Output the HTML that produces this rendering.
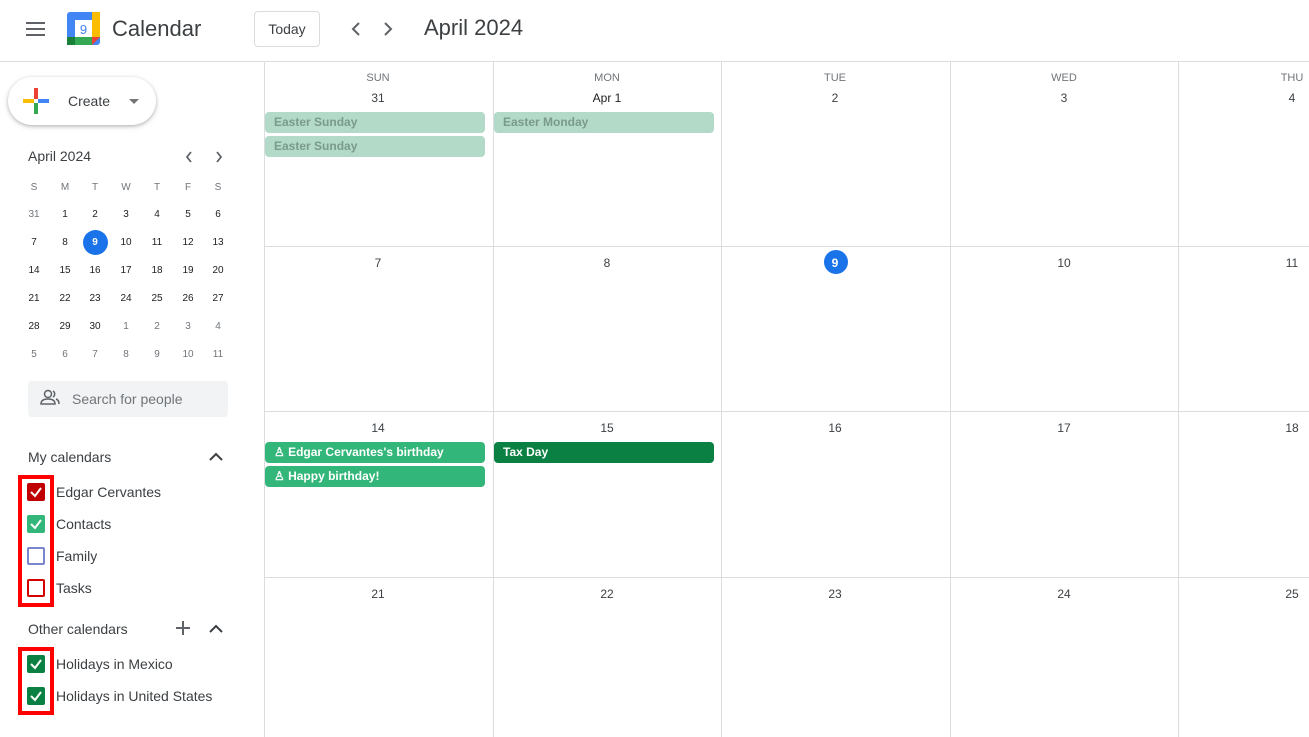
<!DOCTYPE html>
<html><head><meta charset="utf-8"><style>
*{margin:0;padding:0;box-sizing:border-box}
body{width:1309px;height:737px;overflow:hidden;background:#fff;font-family:"Liberation Sans",Arial,sans-serif;color:#3c4043;position:relative}
.a{position:absolute}
.mini{position:absolute;width:30px;text-align:center;font-size:10px;color:#202124}
.mini.o{color:#70757a}
.mh{font-size:10px;color:#70757a}
.vl{position:absolute;top:62px;bottom:0;width:1px;background:#dadce0}
.hl{position:absolute;left:264px;right:0;height:1px;background:#dadce0}
.dh{position:absolute;width:228px;text-align:center;font-size:11px;color:#70757a}
.dn{position:absolute;width:228px;text-align:center;font-size:12px;color:#3c4043}
.ev{position:absolute;height:21px;border-radius:4px;font-size:12px;font-weight:bold;padding-left:9px;line-height:21px;white-space:nowrap}
.cb{position:absolute;left:27px;width:18px;height:18px;border-radius:2px}
.cl{position:absolute;left:56px;font-size:14px;color:#3c4043}
</style></head><body>
<div class="a" style="left:26px;top:22px;width:19px;height:2px;background:#5f6368;box-shadow:0 6px 0 #5f6368,0 12px 0 #5f6368"></div>
<svg class="a" style="left:67px;top:12px" width="33" height="33" viewBox="0 0 33 33">
<rect x="0" y="0" width="33" height="33" rx="3" fill="#4285f4"/>
<rect x="25" y="0" width="8" height="25" fill="#fbbc04"/>
<rect x="0" y="25" width="25" height="8" fill="#34a853"/>
<rect x="0" y="25" width="8" height="8" fill="#188038"/>
<polygon points="25,25 33,25 25,33" fill="#ea4335"/>
<rect x="8" y="8" width="17" height="17" fill="#fff"/>
<text x="16.5" y="22" font-size="13" text-anchor="middle" fill="#4285f4" font-family="Liberation Sans">9</text>
</svg>
<div class="a" style="left:112px;top:16px;font-size:22px;color:#3c4043">Calendar</div>
<div class="a" style="left:254px;top:11px;width:66px;height:36px;border:1px solid #dadce0;border-radius:4px;font-size:14px;text-align:center;line-height:34px">Today</div>
<svg class="a" style="left:346px;top:19px" width="56" height="20"><path d="M13 4 L7 10 L13 16" fill="none" stroke="#5f6368" stroke-width="2"/><path d="M39 4 L45 10 L39 16" fill="none" stroke="#5f6368" stroke-width="2"/></svg>
<div class="a" style="left:424px;top:15px;font-size:22px;color:#3c4043">April 2024</div>
<div class="a" style="left:0;top:61px;width:1309px;height:1px;background:#dadce0"></div>
<div class="a" style="left:8px;top:77px;width:148px;height:48px;border-radius:24px;background:#fff;box-shadow:0 1px 3px rgba(60,64,67,.3),0 2px 6px rgba(60,64,67,.15)"></div>
<svg class="a" style="left:23px;top:88px" width="26" height="26"><rect x="11" y="0" width="4" height="11" fill="#ea4335"/><rect x="15" y="11" width="11" height="4" fill="#4285f4"/><rect x="11" y="15" width="4" height="11" fill="#34a853"/><rect x="0" y="11" width="11" height="4" fill="#fbbc04"/></svg>
<div class="a" style="left:68px;top:93px;font-size:14px;color:#3c4043">Create</div>
<div class="a" style="left:129px;top:99px;border:5px solid transparent;border-top-color:#757575;border-bottom:0"></div>
<div class="a" style="left:28px;top:148px;font-size:14px;color:#3c4043">April 2024</div>
<svg class="a" style="left:182px;top:149px" width="45" height="16"><path d="M9 3 L5 8 L9 13" fill="none" stroke="#5f6368" stroke-width="1.8"/><path d="M35 3 L39 8 L35 13" fill="none" stroke="#5f6368" stroke-width="1.8"/></svg>
<div class="a" style="left:83px;top:230px;width:25px;height:25px;border-radius:50%;background:#1a73e8"></div>
<div id="mc"></div>
<div class="a" style="left:28px;top:381px;width:200px;height:36px;background:#f1f3f4;border-radius:4px"></div>
<svg class="a" style="left:40px;top:389px" width="20" height="18"><circle cx="8" cy="5" r="3.5" fill="none" stroke="#5f6368" stroke-width="1.5"/><path d="M1 15 Q1 10 8 10 Q15 10 15 15 Z" fill="none" stroke="#5f6368" stroke-width="1.5"/><path d="M13 2 A3.5 3.5 0 0 1 13 8 M16 10 Q19 11 19 15" fill="none" stroke="#5f6368" stroke-width="1.5"/></svg>
<div class="a" style="left:72px;top:391px;font-size:14px;color:#70757a">Search for people</div>
<div class="a" style="left:28px;top:449px;font-size:14px;color:#3c4043">My calendars</div>
<svg class="a" style="left:208px;top:451px" width="16" height="12"><path d="M2 9 L8 3 L14 9" fill="none" stroke="#3c4043" stroke-width="2"/></svg>
<div class="a" style="left:18px;top:475px;width:36px;height:132px;border:4px solid #f00"></div>
<div class="cb" style="top:483px;background:#c00000"></div>
<div class="cb" style="top:515px;background:#33b679"></div>
<div class="cb" style="top:547px;border:2px solid #7986cb"></div>
<div class="cb" style="top:579px;border:2px solid #d50000"></div>
<div class="cl" style="top:484px">Edgar Cervantes</div>
<div class="cl" style="top:516px">Contacts</div>
<div class="cl" style="top:548px">Family</div>
<div class="cl" style="top:580px">Tasks</div>
<div class="a" style="left:28px;top:621px;font-size:14px;color:#3c4043">Other calendars</div>
<svg class="a" style="left:175px;top:620px" width="50" height="16"><path d="M8 1 V15 M1 8 H15" stroke="#5f6368" stroke-width="2"/><path d="M35 12 L41 6 L47 12" fill="none" stroke="#3c4043" stroke-width="2"/></svg>
<div class="a" style="left:18px;top:647px;width:36px;height:68px;border:4px solid #f00"></div>
<div class="cb" style="top:655px;background:#0b8043"></div>
<div class="cb" style="top:687px;background:#0b8043"></div>
<div class="cl" style="top:656px">Holidays in Mexico</div>
<div class="cl" style="top:688px">Holidays in United States</div>
<svg class="a" style="left:27px;top:483px" width="18" height="222">
<g fill="none" stroke="#fff" stroke-width="2"><path d="M4 9 L8 13 L14 5"/><path d="M4 41 L8 45 L14 37"/><path d="M4 181 L8 185 L14 177"/><path d="M4 213 L8 217 L14 209"/></g></svg>
<div class="vl" style="left:264px"></div>
<div class="vl" style="left:493px"></div>
<div class="vl" style="left:721px"></div>
<div class="vl" style="left:950px"></div>
<div class="vl" style="left:1178px"></div>
<div class="hl" style="top:246px"></div>
<div class="hl" style="top:411px"></div>
<div class="hl" style="top:577px"></div>
<div id="g"></div>
<div class="a" style="left:824px;top:250px;width:24px;height:24px;border-radius:50%;background:#1a73e8"></div>
<div class="ev" style="left:265px;top:112px;width:220px;background:#b3d9c8;color:#7a9a8c">Easter Sunday</div>
<div class="ev" style="left:265px;top:136px;width:220px;background:#b3d9c8;color:#7a9a8c">Easter Sunday</div>
<div class="ev" style="left:494px;top:112px;width:220px;background:#b3d9c8;color:#7a9a8c">Easter Monday</div>
<div class="ev" style="left:265px;top:442px;width:220px;background:#33b679;color:#fff">♙ Edgar Cervantes's birthday</div>
<div class="ev" style="left:265px;top:466px;width:220px;background:#33b679;color:#fff">♙ Happy birthday!</div>
<div class="ev" style="left:494px;top:442px;width:220px;background:#0b8043;color:#fff">Tax Day</div>
<script>
var xs=[34,65,95,126,157,188,218],h="";
"SMTWTFS".split("").forEach(function(c,i){h+='<div class="mini mh" style="left:'+(xs[i]-15)+'px;top:182px">'+c+'</div>'});
var d=[[31,1,2,3,4,5,6],[7,8,9,10,11,12,13],[14,15,16,17,18,19,20],[21,22,23,24,25,26,27],[28,29,30,1,2,3,4],[5,6,7,8,9,10,11]];
d.forEach(function(r,ri){r.forEach(function(n,i){var o=(ri==0&&i==0)||(ri==4&&i>2)||ri==5;var st=(ri==1&&i==2)?'color:#fff;font-weight:bold;':'';h+='<div class="mini'+(o?' o':'')+'" style="'+st+'left:'+(xs[i]-15)+'px;top:'+(209+ri*28)+'px">'+n+'</div>'})});
document.getElementById("mc").innerHTML=h;
var cx=[264,493,721,950,1178],nm=["SUN","MON","TUE","WED","THU"],g="";
var rows=[["31","Apr 1","2","3","4"],["7","8","9","10","11"],["14","15","16","17","18"],["21","22","23","24","25"]],ry=[91,256,421,587];
nm.forEach(function(n,i){g+='<div class="dh" style="left:'+cx[i]+'px;top:72px;">'+n+'</div>'});
rows.forEach(function(r,ri){r.forEach(function(n,i){var st='left:'+cx[i]+'px;';if(ri==1&&i==2)st+='color:#fff;font-weight:bold;z-index:2;';if(ri==0&&i==1)st+='color:#202124;';g+='<div class="dn" style="'+st+'top:'+ry[ri]+'px">'+n+'</div>'})});
document.getElementById("g").innerHTML=g;
</script>
</body></html>
